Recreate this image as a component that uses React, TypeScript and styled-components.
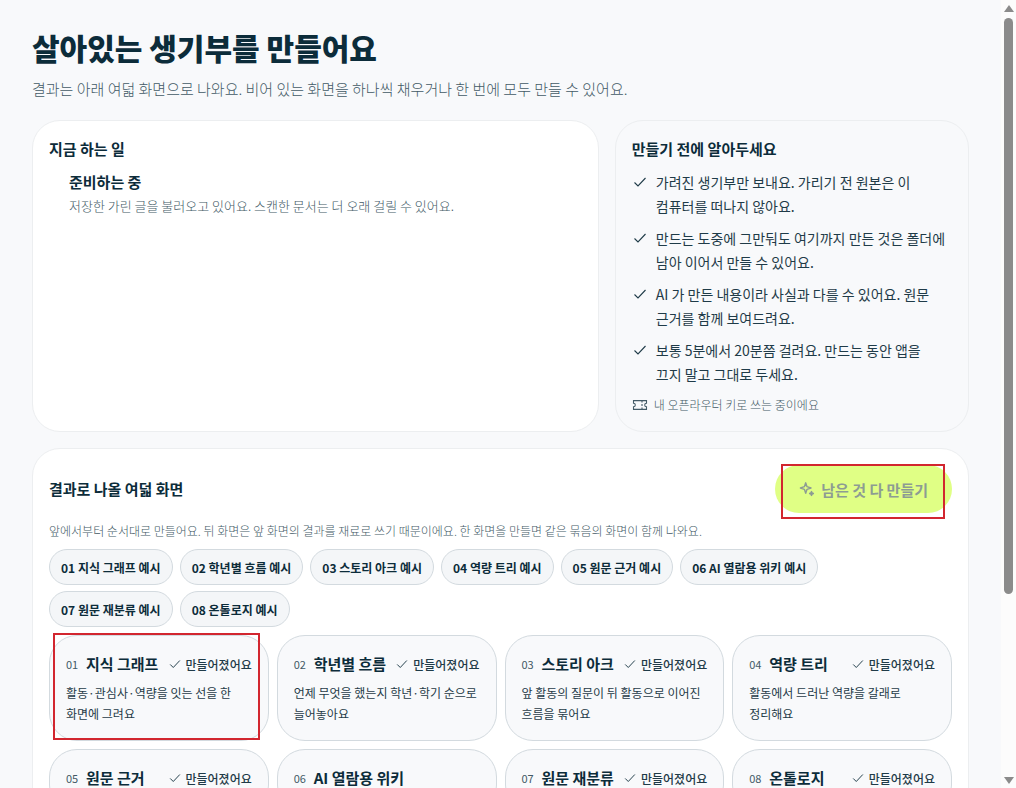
import React from "react";
import styled, { createGlobalStyle, css } from "styled-components";

const color = {
  page: "#f8f9fb",
  surface: "#ffffff",
  chip: "#f4f6f8",
  ink: "#0c2c3a",
  body: "#1f3b48",
  muted: "#435a66",
  line: "#eceef0",
  lineStrong: "#d3dadf",
  lime: "#e0ff85",
  disabled: "#8d9c93",
  mark: "#d2262f",
};

const GlobalStyle = createGlobalStyle`
  * { box-sizing: border-box; }
  body {
    margin: 0;
    background: ${color.page};
    color: ${color.ink};
    font-family: "Noto Sans CJK KR", "Noto Sans", sans-serif;
    word-break: keep-all;
  }
  h1, h2, h3, p, ul { margin: 0; padding: 0; }
  ul { list-style: none; }
`;

const Shell = styled.div`
  display: flex;
  height: 100vh;
  overflow: hidden;
`;

const Main = styled.main`
  flex: 1;
  min-width: 0;
  padding: 27px 32px 0;
`;

const Title = styled.h1`
  font-size: 30px;
  line-height: 40px;
  font-weight: 900;
`;

const Lead = styled.p`
  margin: 8px 0 17px;
  font-size: 15px;
  line-height: 28px;
  font-weight: 300;
  color: ${color.muted};
`;

const TopGrid = styled.div`
  display: grid;
  grid-template-columns: 8fr 5fr;
  gap: 16px;
  margin-bottom: 16px;
`;

const Panel = styled.section<{ $plain?: boolean }>`
  padding: 16px;
  border: 1px solid ${color.line};
  border-radius: 28px;
  background: ${(p) => (p.$plain ? color.page : color.surface)};
`;

const Heading = styled.h2`
  font-size: 15px;
  line-height: 24px;
  font-weight: 700;
`;

const Status = styled.div`
  margin-top: 9px;
  padding-left: 20px;
`;

const StatusName = styled.h3`
  font-size: 15px;
  line-height: 24px;
  font-weight: 700;
`;

const StatusText = styled.p`
  font-size: 13px;
  line-height: 24px;
  font-weight: 300;
  color: ${color.muted};
`;

const Notes = styled.ul`
  display: grid;
  gap: 8px;
  margin: 9px 0;
`;

const Note = styled.li`
  display: flex;
  gap: 8px;
  padding-right: 4px;
  font-size: 14px;
  line-height: 24px;
  color: ${color.body};

  svg { flex: none; margin-top: 4px; }
`;

const KeyNote = styled.p`
  display: flex;
  align-items: center;
  gap: 6px;
  font-size: 12px;
  line-height: 20px;
  font-weight: 300;
  color: ${color.muted};
`;

const ResultsHead = styled.div`
  display: flex;
  align-items: center;
  justify-content: space-between;
`;

const Marked = styled.div`
  position: relative;
`;

const Mark = styled.span<{ $inset: string }>`
  position: absolute;
  inset: ${(p) => p.$inset};
  border: 2px solid ${color.mark};
  pointer-events: none;
`;

const MakeButton = styled.button`
  display: flex;
  align-items: center;
  gap: 6px;
  height: 48px;
  padding: 0 24px;
  border: 0;
  border-radius: 24px;
  background: ${color.lime};
  color: ${color.disabled};
  font: inherit;
  font-size: 15px;
  font-weight: 700;
`;

const Hint = styled.p`
  margin: 8px 0;
  font-size: 12px;
  line-height: 20px;
  font-weight: 300;
  color: ${color.muted};
`;

const Chips = styled.div`
  display: flex;
  flex-wrap: wrap;
  gap: 6px 7px;
  margin-bottom: 8px;
  padding-right: 16px;
`;

const Chip = styled.button`
  height: 36px;
  padding: 0 11px;
  border: 1px solid ${color.lineStrong};
  border-radius: 18px;
  background: ${color.chip};
  color: ${color.ink};
  font: inherit;
  font-size: 12px;
  font-weight: 700;
`;

const Cards = styled.ul`
  display: grid;
  grid-template-columns: repeat(4, minmax(0, 1fr));
  gap: 8px;
`;

const Card = styled.li`
  position: relative;
  padding: 16px;
  border: 1px solid ${color.lineStrong};
  border-radius: 28px;
  background: ${color.page};
`;

const CardHead = styled.div`
  display: flex;
  align-items: center;
  height: 24px;
  margin-bottom: 6px;
  white-space: nowrap;
`;

const CardNumber = styled.span`
  width: 20px;
  font-size: 11px;
  color: ${color.muted};
`;

const CardTitle = styled.h3`
  font-size: 15px;
  line-height: 24px;
  font-weight: 700;
`;

const Done = styled.span`
  display: flex;
  align-items: center;
  gap: 4px;
  margin-left: auto;
  font-size: 12px;
  font-weight: 500;
  color: ${color.body};
`;

const CardText = styled.p`
  font-size: 12px;
  line-height: 21px;
  color: ${color.body};
`;

const Track = styled.div`
  display: flex;
  flex-direction: column;
  align-items: center;
  width: 15px;
  padding: 5px 0 4px;
  background: #fcfcfc;
`;

const arrow = css`
  width: 0;
  border: solid transparent;
  border-width: 0 5px;
`;

const ArrowUp = styled.span`
  ${arrow}
  border-bottom: 7px solid #8b8b8b;
`;

const ArrowDown = styled.span`
  ${arrow}
  margin-top: auto;
  border-top: 7px solid #8b8b8b;
`;

const Thumb = styled.span`
  width: 9px;
  height: 74%;
  margin-top: 6px;
  border-radius: 5px;
  background: #8b8b8b;
`;

function CheckIcon({ size = 16 }: { size?: number }) {
  return (
    <svg width={size} height={size} viewBox="0 0 16 16" fill="none" stroke="currentColor" strokeWidth="1.1" aria-hidden="true">
      <path d="M2.5 8.5 6 12l7.5-8" />
    </svg>
  );
}

function TicketIcon() {
  return (
    <svg width="16" height="16" viewBox="0 0 16 16" fill="none" stroke="currentColor" strokeWidth="1.1" aria-hidden="true">
      <path d="M1.5 3.6h13v2.6a1.8 1.8 0 0 0 0 3.6v2.6h-13V9.8a1.8 1.8 0 0 0 0-3.6z" />
      <path d="M10 3.6v2M10 7v2M10 10.4v2" />
    </svg>
  );
}

function SparkleIcon() {
  return (
    <svg width="16" height="16" viewBox="0 0 16 16" fill="none" stroke="currentColor" strokeWidth="1.4" strokeLinejoin="round" aria-hidden="true">
      <path d="M6.7 1.8 8 5.7 12 7 8 8.3l-1.3 3.9-1.3-3.9L1.4 7l4-1.3z" />
      <path d="m12.5 10.6.6 1.3 1.3.6-1.3.6-.6 1.3-.6-1.3-1.3-.6 1.3-.6z" fill="currentColor" />
    </svg>
  );
}

const notes = [
  "가려진 생기부만 보내요. 가리기 전 원본은 이 컴퓨터를 떠나지 않아요.",
  "만드는 도중에 그만둬도 여기까지 만든 것은 폴더에 남아 이어서 만들 수 있어요.",
  "AI 가 만든 내용이라 사실과 다를 수 있어요. 원문 근거를 함께 보여드려요.",
  "보통 5분에서 20분쯤 걸려요. 만드는 동안 앱을 끄지 말고 그대로 두세요.",
];

const screens = [
  { name: "지식 그래프", text: "활동·관심사·역량을 잇는 선을 한 화면에 그려요", done: true, marked: true },
  { name: "학년별 흐름", text: "언제 무엇을 했는지 학년·학기 순으로 늘어놓아요", done: true },
  { name: "스토리 아크", text: "앞 활동의 질문이 뒤 활동으로 이어진 흐름을 묶어요", done: true },
  { name: "역량 트리", text: "활동에서 드러난 역량을 갈래로 정리해요", done: true },
  { name: "원문 근거", text: "", done: true },
  { name: "AI 열람용 위키", text: "", done: false },
  { name: "원문 재분류", text: "", done: true },
  { name: "온톨로지", text: "", done: true },
].map((s, i) => ({ ...s, no: `0${i + 1}` }));

export default function App() {
  return (
    <>
      <GlobalStyle />
      <Shell>
        <Main>
          <Title>살아있는 생기부를 만들어요</Title>
          <Lead>결과는 아래 여덟 화면으로 나와요. 비어 있는 화면을 하나씩 채우거나 한 번에 모두 만들 수 있어요.</Lead>

          <TopGrid>
            <Panel>
              <Heading>지금 하는 일</Heading>
              <Status>
                <StatusName>준비하는 중</StatusName>
                <StatusText>저장한 가린 글을 불러오고 있어요. 스캔한 문서는 더 오래 걸릴 수 있어요.</StatusText>
              </Status>
            </Panel>
            <Panel $plain>
              <Heading>만들기 전에 알아두세요</Heading>
              <Notes>
                {notes.map((note) => (
                  <Note key={note}>
                    <CheckIcon />
                    <span>{note}</span>
                  </Note>
                ))}
              </Notes>
              <KeyNote>
                <TicketIcon />내 오픈라우터 키로 쓰는 중이에요
              </KeyNote>
            </Panel>
          </TopGrid>

          <Panel>
            <ResultsHead>
              <Heading>결과로 나올 여덟 화면</Heading>
              <Marked>
                <MakeButton type="button" disabled>
                  <SparkleIcon />
                  남은 것 다 만들기
                </MakeButton>
                <Mark $inset="-1px 7px -6px 6px" />
              </Marked>
            </ResultsHead>
            <Hint>
              앞에서부터 순서대로 만들어요. 뒤 화면은 앞 화면의 결과를 재료로 쓰기 때문이에요. 한 화면을 만들면 같은 묶음의 화면이 함께 나와요.
            </Hint>
            <Chips>
              {screens.map((s) => (
                <Chip type="button" key={s.no}>
                  {s.no} {s.name} 예시
                </Chip>
              ))}
            </Chips>
            <Cards>
              {screens.map((s) => (
                <Card key={s.no}>
                  <CardHead>
                    <CardNumber>{s.no}</CardNumber>
                    <CardTitle>{s.name}</CardTitle>
                    {s.done && (
                      <Done>
                        <CheckIcon size={14} />
                        만들어졌어요
                      </Done>
                    )}
                  </CardHead>
                  {s.text && <CardText>{s.text}</CardText>}
                  {s.marked && <Mark $inset="-3px 8px 0 3px" />}
                </Card>
              ))}
            </Cards>
          </Panel>
        </Main>
        <Track aria-hidden="true">
          <ArrowUp />
          <Thumb />
          <ArrowDown />
        </Track>
      </Shell>
    </>
  );
}
